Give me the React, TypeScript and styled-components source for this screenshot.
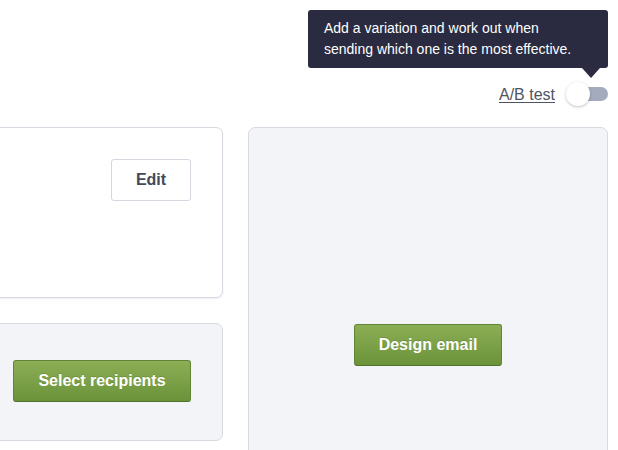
import React from "react";
import styled, { createGlobalStyle } from "styled-components";

const Global = createGlobalStyle`
  html, body { margin: 0; padding: 0; background: #ffffff; }
  body {
    font-family: "Liberation Sans", Arial, Helvetica, sans-serif;
    overflow: hidden;
    width: 618px;
    height: 450px;
  }
`;

const Page = styled.div`
  width: 618px;
  height: 450px;
  overflow: hidden;
  box-sizing: border-box;
  padding: 0 10px 0 0;
`;

const Header = styled.div`
  display: flex;
  justify-content: flex-end;
  align-items: flex-end;
  height: 107px;
  margin-bottom: 20px;
`;

const AbControl = styled.div`
  position: relative;
  display: flex;
  align-items: center;
  gap: 11px;
  height: 26px;
`;

const AbLabel = styled.a`
  font-size: 16px;
  color: #4f5462;
  text-decoration: underline;
  text-underline-offset: 2px;
  line-height: 18px;
  margin-top: 2px;
  cursor: pointer;
`;

const Toggle = styled.div`
  position: relative;
  width: 42px;
  height: 26px;
  display: flex;
  align-items: center;
`;

const Track = styled.div`
  margin-left: 6px;
  width: 36px;
  height: 14px;
  border-radius: 7px;
  background: #a4abbc;
`;

const Knob = styled.div`
  position: absolute;
  left: 0;
  top: 1px;
  width: 24px;
  height: 24px;
  border-radius: 50%;
  background: #ffffff;
  box-shadow: 0 1px 3px rgba(30, 35, 60, 0.28);
`;

const Tooltip = styled.div`
  position: absolute;
  right: 0;
  bottom: 39px;
  width: 300px;
  box-sizing: border-box;
  padding: 8px 16px 8px 16px;
  background: #2a2b40;
  color: #ffffff;
  font-size: 14px;
  line-height: 21px;
  border-radius: 3px;
  white-space: nowrap;

  &::after {
    content: "";
    position: absolute;
    right: 8px;
    top: 100%;
    border-left: 9px solid transparent;
    border-right: 9px solid transparent;
    border-top: 10px solid #2a2b40;
  }
`;

const Content = styled.div`
  display: grid;
  grid-template-columns: 1fr 360px;
  column-gap: 25px;
  margin-left: -120px;
  align-items: start;
`;

const LeftColumn = styled.div`
  display: flex;
  flex-direction: column;
  gap: 25px;
`;

const Card = styled.div<{ $tone: "white" | "grey"; $height: number }>`
  box-sizing: border-box;
  height: ${(p) => p.$height}px;
  border: 1px solid #d8dae2;
  border-radius: 7px;
  background: ${(p) => (p.$tone === "white" ? "#ffffff" : "#f3f4f7")};
  box-shadow: ${(p) =>
    p.$tone === "white" ? "0 1px 2px rgba(20, 30, 60, 0.08)" : "none"};
  display: flex;
`;

const SummaryCard = styled(Card)`
  justify-content: flex-end;
  align-items: flex-start;
  padding: 31px 31px 0 0;
`;

const RecipientsCard = styled(Card)`
  justify-content: flex-end;
  align-items: center;
  padding: 0 31px 3px 0;
`;

const DesignCard = styled(Card)`
  justify-content: center;
  align-items: center;
`;

const OutlineButton = styled.button`
  width: 80px;
  height: 42px;
  border: 1px solid #d5d7df;
  border-radius: 3px;
  background: #ffffff;
  color: #434958;
  font-family: "Liberation Sans", Arial, sans-serif;
  font-weight: 700;
  font-size: 16px;
  cursor: pointer;
`;

const GreenButton = styled.button<{ $width: number }>`
  width: ${(p) => p.$width}px;
  height: 42px;
  border: 1px solid #5f8535;
  border-bottom-color: #4f7229;
  border-radius: 3px;
  background: linear-gradient(#8cae55, #6b933a);
  color: #ffffff;
  font-family: "Liberation Sans", Arial, sans-serif;
  font-weight: 700;
  font-size: 16px;
  text-shadow: 0 -1px 0 rgba(60, 90, 30, 0.25);
  cursor: pointer;
`;

export default function App() {
  return (
    <Page>
      <Global />
      <Header>
        <AbControl>
          <Tooltip>
            Add a variation and work out when
            <br />
            sending which one is the most effective.
          </Tooltip>
          <AbLabel>A/B test</AbLabel>
          <Toggle>
            <Track />
            <Knob />
          </Toggle>
        </AbControl>
      </Header>
      <Content>
        <LeftColumn>
          <SummaryCard $tone="white" $height={171}>
            <OutlineButton>Edit</OutlineButton>
          </SummaryCard>
          <RecipientsCard $tone="grey" $height={118}>
            <GreenButton $width={178}>Select recipients</GreenButton>
          </RecipientsCard>
        </LeftColumn>
        <DesignCard $tone="grey" $height={436}>
          <GreenButton $width={148}>Design email</GreenButton>
        </DesignCard>
      </Content>
    </Page>
  );
}
